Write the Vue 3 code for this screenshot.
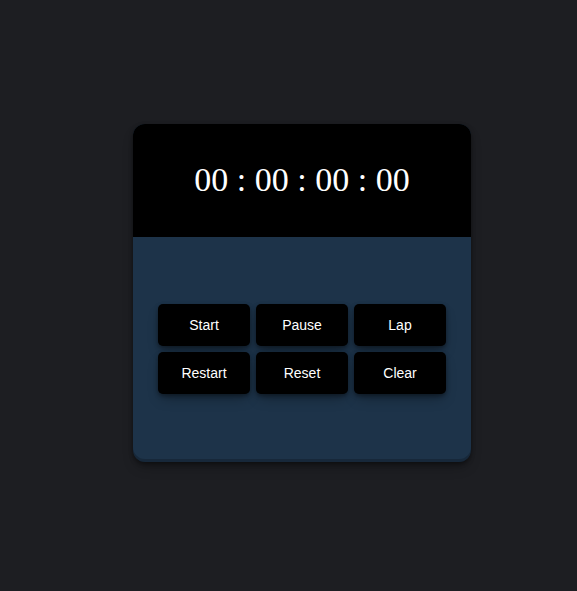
<script setup>
import { computed, onUnmounted, ref } from 'vue'

const elapsed = ref(0)
let timer = null
let last = 0

const pad = (n) => String(n).padStart(2, '0')
const time = computed(() => {
  const cs = Math.floor(elapsed.value / 10)
  return [
    Math.floor(cs / 360000),
    Math.floor(cs / 6000) % 60,
    Math.floor(cs / 100) % 60,
    cs % 100,
  ].map(pad).join(' : ')
})

const laps = ref([])

function start() {
  if (timer) return
  last = Date.now()
  timer = setInterval(() => {
    const now = Date.now()
    elapsed.value += now - last
    last = now
  }, 10)
}
function pause() {
  clearInterval(timer)
  timer = null
}
function lap() {
  laps.value.push(time.value)
}
function restart() {
  reset()
  start()
}
function reset() {
  pause()
  elapsed.value = 0
}
function clear() {
  laps.value = []
}

const actions = [
  { label: 'Start', run: start },
  { label: 'Pause', run: pause },
  { label: 'Lap', run: lap },
  { label: 'Restart', run: restart },
  { label: 'Reset', run: reset },
  { label: 'Clear', run: clear },
]

onUnmounted(pause)
</script>

<template>
  <main class="page">
    <section class="stopwatch">
      <div class="display">{{ time }}</div>
      <div class="panel">
        <div class="controls">
          <button v-for="a in actions" :key="a.label" type="button" @click="a.run">{{ a.label }}</button>
        </div>
      </div>
    </section>
    <ol v-if="laps.length" class="laps">
      <li v-for="(l, i) in laps" :key="i">{{ l }}</li>
    </ol>
  </main>
</template>

<style>
body {
  background: #1d1e22;
}
</style>

<style scoped>
.page {
  box-sizing: border-box;
  min-height: 100vh;
  padding: 0 0 5px 27px;
  display: flex;
  flex-direction: column;
  align-items: center;
  justify-content: center;
}
.stopwatch {
  width: 100%;
  max-width: 338px;
  aspect-ratio: 1;
  display: grid;
  grid-template-rows: 1fr 2fr;
  border-radius: 12px;
  background: #1d3349;
  box-shadow: rgba(0, 0, 0, 0.4) 0 2px 4px, rgba(0, 0, 0, 0.3) 0 7px 13px -3px,
    rgba(0, 0, 0, 0.2) 0 -3px 0 inset;
}
.display {
  display: flex;
  align-items: center;
  justify-content: center;
  border-radius: 12px 12px 0 0;
  background: #000;
  color: #fff;
  font: 34px "Liberation Serif", "Times New Roman", serif;
}
.panel {
  display: flex;
  align-items: center;
  justify-content: center;
  padding: 0 25px;
}
.controls {
  flex: 1;
  display: grid;
  grid-template-columns: repeat(3, 1fr);
  gap: 6px;
}
button {
  height: 42px;
  padding: 0;
  border: 0;
  border-radius: 5px;
  background: #000;
  color: #fff;
  font: 14px "Liberation Sans", Arial, sans-serif;
  cursor: pointer;
  box-shadow: rgba(0, 0, 0, 0.4) 0 2px 4px, rgba(0, 0, 0, 0.3) 0 7px 13px -3px,
    rgba(0, 0, 0, 0.2) 0 -3px 0 inset;
}
.laps {
  color: #fff;
  font: 16px "Liberation Serif", "Times New Roman", serif;
}
</style>
